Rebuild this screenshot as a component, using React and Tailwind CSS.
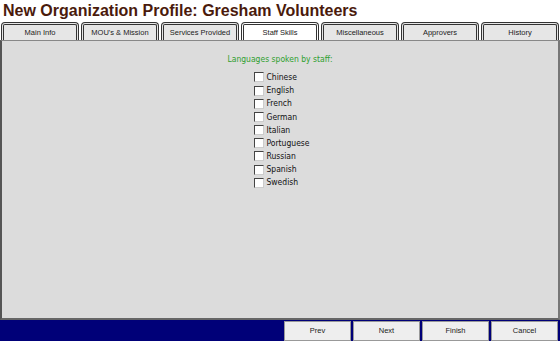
const tabs = ['Main Info', "MOU's & Mission", 'Services Provided', 'Staff Skills', 'Miscellaneous', 'Approvers', 'History']
const langs = ['Chinese', 'English', 'French', 'German', 'Italian', 'Portuguese', 'Russian', 'Spanish', 'Swedish']

export default function App() {
  return (
    <div className="w-[560px] h-[341px] bg-white flex flex-col font-['Liberation_Sans',Arial,sans-serif] overflow-hidden">
      <h1 className="h-[22px] pl-[3px] pt-[1px] text-[16px] leading-[19px] font-bold text-[#4a1a0c]">
        New Organization Profile: Gresham Volunteers
      </h1>
      <div className="flex gap-[2px] px-[1px] h-[18px]">
        {tabs.map((t) => (
          <div
            key={t}
            className={
              'flex-1 rounded-t-[4px] border-[3px] border-b-0 border-double border-[#333] flex items-center justify-center text-[7.5px] text-[#222] ' +
              (t === 'Staff Skills' ? 'bg-white' : 'bg-[#e6e6e6]')
            }
          >
            {t}
          </div>
        ))}
      </div>
      <div className="flex-1 bg-[#dcdcdc] border-l-2 border-r-2 border-t border-b-2 border-l-[#555] border-r-[#777] border-t-[#888] border-b-[#666] flex flex-col items-center pt-[12px] font-['DejaVu_Sans_Condensed','DejaVu_Sans',Verdana,sans-serif]">
        <div className="text-[8.5px] text-[#2f9f2f]">Languages spoken by staff:</div>
        <div className="mt-[5px] ml-[4px] flex flex-col">
          {langs.map((l) => (
            <label key={l} className="flex items-center h-[13.2px] gap-[2px] text-[8.5px] text-[#111]">
              <span className="w-[10px] h-[10px] bg-white border border-t-[#444] border-l-[#444] border-r-[#ccc] border-b-[#ccc]" />
              {l}
            </label>
          ))}
        </div>
      </div>
      <div className="h-[21px] bg-[#000078] flex justify-end gap-[2px] pr-[2px] pt-[1px]">
        {['Prev', 'Next', 'Finish', 'Cancel'].map((b) => (
          <button key={b} className="w-[67px] bg-[#eeeeee] border border-[#999] text-[7.5px] text-[#222]">
            {b}
          </button>
        ))}
      </div>
    </div>
  )
}
